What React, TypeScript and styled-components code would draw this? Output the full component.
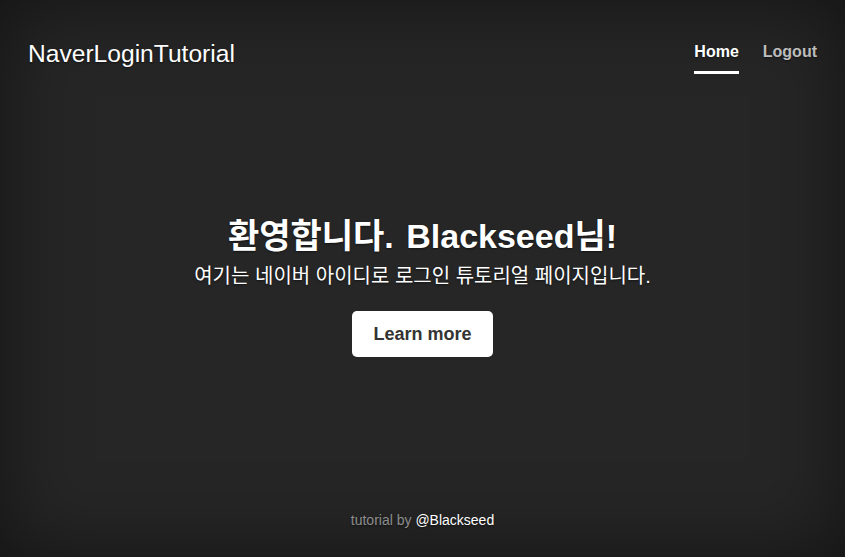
import React from "react";
import styled, { createGlobalStyle } from "styled-components";

const GlobalStyle = createGlobalStyle`
  html, body, #root { margin: 0; padding: 0; height: 100%; }
  body {
    background-color: #262626;
    color: #fff;
    font-family: "Liberation Sans", "Noto Sans CJK KR", Arial, sans-serif;
    text-shadow: 0 1px 2px rgba(0, 0, 0, 0.5);
  }
  * { box-sizing: border-box; }
`;

const Page = styled.div`
  display: flex;
  flex-direction: column;
  height: 100vh;
  padding: 0 28px 26px;
  box-shadow: inset 0 0 80px rgba(0, 0, 0, 0.5);
`;

const Masthead = styled.header`
  display: flex;
  justify-content: space-between;
  align-items: flex-start;
  padding-top: 39px;
`;

const Brand = styled.h3`
  margin: 0;
  font-size: 24.6px;
  line-height: 29px;
  font-weight: 400;
`;

const Nav = styled.nav`
  display: flex;
  gap: 24px;
  padding-top: 1px;
`;

const NavLink = styled.a<{ $active?: boolean }>`
  display: block;
  font-size: 16px;
  line-height: 24px;
  font-weight: 700;
  padding: 0 0 7px;
  text-decoration: none;
  color: ${(p) => (p.$active ? "#fff" : "rgba(255,255,255,0.72)")};
  border-bottom: 3px solid ${(p) => (p.$active ? "#fff" : "transparent")};
  cursor: pointer;
`;

const Cover = styled.main`
  flex: 1;
  display: flex;
  flex-direction: column;
  align-items: center;
  justify-content: center;
  text-align: center;
  padding-bottom: 12px;
`;

const Title = styled.h1`
  margin: 0;
  font-size: 34px;
  line-height: 40px;
  font-weight: 700;
  word-spacing: 3px;
`;

const Lead = styled.p`
  margin: 5px 0 20px;
  font-size: 20px;
  line-height: 30px;
  font-weight: 400;
`;

const Button = styled.a`
  display: inline-block;
  padding: 12px 21px;
  font-size: 18px;
  line-height: 22px;
  font-weight: 700;
  color: #333;
  background: #fff;
  border-radius: 5px;
  text-shadow: none;
  text-decoration: none;
  cursor: pointer;
`;

const Footer = styled.footer`
  text-align: center;
  font-size: 14px;
  line-height: 21px;
  color: rgba(255, 255, 255, 0.5);
`;

const FooterLink = styled.a`
  color: #fff;
  text-decoration: none;
`;

export default function App() {
  return (
    <>
      <GlobalStyle />
      <Page>
        <Masthead>
          <Brand>NaverLoginTutorial</Brand>
          <Nav>
            <NavLink $active>Home</NavLink>
            <NavLink>Logout</NavLink>
          </Nav>
        </Masthead>
        <Cover>
          <Title>환영합니다. Blackseed님!</Title>
          <Lead>여기는 네이버 아이디로 로그인 튜토리얼 페이지입니다.</Lead>
          <Button>Learn more</Button>
        </Cover>
        <Footer>
          tutorial by <FooterLink>@Blackseed</FooterLink>
        </Footer>
      </Page>
    </>
  );
}
